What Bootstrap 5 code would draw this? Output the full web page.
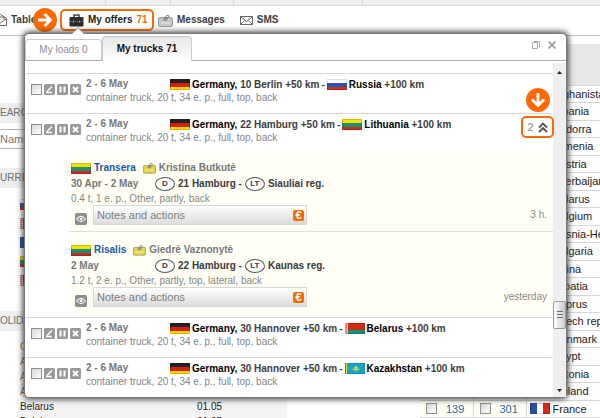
<!DOCTYPE html>
<html lang="en">
<head>
<meta charset="utf-8">
<meta name="viewport" content="width=device-width, initial-scale=1">
<title>My offers</title>
<link href="https://cdn.jsdelivr.net/npm/bootstrap@5.3.0/dist/css/bootstrap.min.css" rel="stylesheet">
<style>
:root{--accent:#ff6a00;--rule:#d6d6d6}
body{font:10px/14px "Liberation Sans",Arial,sans-serif;color:#333;background:#fff;overflow:hidden;min-height:100vh}
svg{display:block;flex:none}
a{color:inherit;text-decoration:none}
button{background:none;border:0;padding:0;color:inherit}
h2{font-size:10px;line-height:20px;margin:0}
.flag{width:20px;height:11px;outline:1px solid #0002;outline-offset:-1px}
.topstrip{height:6px;background:#efefef;border-bottom:1px solid var(--rule)}
.topstrip span{width:65px;border-right:1px solid var(--rule)}
.topstrip span:first-child{width:106px}
.topstrip span:nth-child(3){width:63px}
.topstrip span:nth-child(4){width:129px}
.mainnav{height:30px;border-bottom:1px solid #c4c4c4;padding-top:3px;font-weight:700}
.mainnav a{height:22px;gap:4px;color:#3c3c3c}
.tables-link{width:58px;margin-left:-6px}
.offers-link{position:relative;width:94px;border:2px solid var(--accent);border-radius:5px;padding-left:7px;margin-right:4px}
.mainnav .offers-link{color:#222}
.sms-link{margin-left:15px}
.orange{color:var(--accent)}
.pointer{position:absolute;left:-29px;top:-3px}
.sidebar{width:287px;color:#6d6d6d;padding-top:67px}
.sidebar h2{background:#eee}
.sidebar input{height:20px;width:200px;border:1px solid #b5b5b5;border-width:1px 0;padding:0;color:#888;font-size:11px;display:block;margin:6px 0 19px}
.rates{padding:11px 0 22px 20px;gap:8px;height:123px}
.holidays{margin:8px 0 0 17px;width:270px}
.holidays td{height:15px;padding:0;color:#a6573f}
.holidays td:first-child{padding-left:3px;width:180px}
.holidays .today td{color:#222;background:#f3f3f3}
.countries{margin-top:8px;width:180px;table-layout:fixed;flex:none;font-size:11px}
.countries td,.countries th{padding:0;height:18px;border-bottom:1px solid var(--rule);white-space:nowrap;color:#222;overflow:hidden}
.countries tr:nth-child(odd) td{height:17px}
.countries th{height:41px;background:#e7e7e7}
.countries .num{background:#fffff4;border-right:1px solid var(--rule)}
.countries .num label{display:flex;gap:9px;padding-left:6px;align-items:center;color:#2a66b0;line-height:14px}
.countries .name{padding-left:26px}
.countries .own{padding-left:3px}
.own div{gap:3px}
.win{position:absolute;left:24px;right:33px;top:33px;bottom:20px;background:#fff;border:1px solid #777;border-radius:5px;box-shadow:0 0 6px 1px #333}
.tip{position:absolute;left:46px;top:-7px}
.tabs{height:27px;border-bottom:1px solid #aaa;padding-right:10px}
.tabs button.tab{border:1px solid #c8c8c8;border-bottom:0;border-radius:4px 4px 0 0;height:21px;color:#8d8d8d;width:77px}
.tabs button.tab.on{height:25px;width:90px;margin:0 0 -1px;background:linear-gradient(#e6e6e6,#fff);color:#111;font-weight:700}
.list{padding-top:12px}
.offer{border-top:1px solid var(--rule);height:40px;padding:3px 0 0 6px;border-radius:3px;position:relative}
.offer p,.reply p{margin:0;line-height:13px;color:#858585}
.when{width:84px;color:#777;font-weight:700}
.tools{gap:2px;padding-top:7px;width:55px}
input[type=checkbox]{appearance:none;width:11px;height:11px;border:1px solid #8f8f8f;background:linear-gradient(135deg,#d8d8d8,#fff);margin:0;flex:none}
.route{gap:2px;white-space:nowrap;font-weight:700;color:#3d3d3d;line-height:13px}
.route b{color:#000}
.scroller{width:13px;background:#efefef;padding:8px 0 5px;margin-top:2px}
.thumb{height:28px;width:13px;border:1px solid #999;border-radius:2px;background:linear-gradient(90deg,#fff,#ccc);margin-top:227px}
.count{position:absolute;right:-1px;top:2px;border:2px solid var(--accent);border-radius:5px;width:33px;height:22px;font-size:11px;background:#fff}
.count button{color:#888}
.down{position:absolute;right:2px;top:-30px}
.replies{margin-left:44px;background:#fffff5}
.reply{height:79px;padding:8px 6px 0 2px;border-bottom:1px solid #dfdfdf;margin-bottom:3px}
.replies div.reply:last-child{border-color:transparent}
.person{gap:3px;height:14px;font-weight:700;color:#777}
.person a{color:1b57a5;color:#1b57a5}
.leg{height:17px;gap:3px;font-weight:700;color:#3a3a3a}
.leg .when{width:81px}
.plate{width:20px;height:14px;border:1px solid #555;border-radius:50%;font-size:8px;line-height:12px;text-align:center;background:#fff}
.actions{gap:6px;padding-left:4px}
.notes{width:214px;height:20px;border:1px solid #d8d8d8;background:linear-gradient(#fff,#dcdcdc);padding:0 2px 0 3px;color:#7d7d7d;font-size:11px}
.euro{background:var(--accent);color:#fff;width:11px;height:11px;border-radius:2px;line-height:11px;font-weight:700;font-size:11px;text-align:center}
.ago{color:#888}
</style>
</head>
<body>
<svg width="0" height="0" class="position-absolute" aria-hidden="true">
<symbol id="de" viewBox="0 0 20 11"><path fill="#222" d="M0 0h20v4H0z"/><path fill="#d5200c" d="M0 4h20v4H0z"/><path fill="#ffd400" d="M0 8h20v3H0z"/></symbol>
<symbol id="lt" viewBox="0 0 20 11"><path fill="#f8e000" d="M0 0h20v4H0z"/><path fill="#1d9070" d="M0 4h20v4H0z"/><path fill="#c82a20" d="M0 8h20v3H0z"/></symbol>
<symbol id="ru" viewBox="0 0 20 11"><path fill="#fff" d="M0 0h20v4H0z"/><path fill="#2b55ad" d="M0 4h20v4H0z"/><path fill="#d52b1e" d="M0 8h20v3H0z"/></symbol>
<symbol id="by" viewBox="0 0 20 11"><path fill="#d02a18" d="M0 0h20v7H0z"/><path fill="#159070" d="M0 7h20v4H0z"/><path fill="#f4b8b8" d="M0 0h3v11H0z"/><path stroke="#d44" stroke-dasharray="1 1" d="M1.5 0v11"/></symbol>
<symbol id="kz" viewBox="0 0 20 11"><path fill="#14a5cc" d="M0 0h20v11H0z"/><path fill="#f3dc20" d="M1 0h1v11H1z"/><circle cx="11" cy="5" r="1.7" fill="#f3dc20"/><path d="M7.500 6q3.500 3 7 0" fill="none" stroke="#f3dc20"/></symbol>
<symbol id="fr" viewBox="0 0 20 11"><path fill="#2b4fa0" d="M0 0h7v11H0z"/><path fill="#fff" d="M7 0h6v11H7z"/><path fill="#d42a1c" d="M13 0h7v11h-7z"/></symbol>
<symbol id="edit" viewBox="0 0 11 11"><rect width="11" height="11" rx="1.500" fill="#999"/><path d="M3 7.500 8 2.500M2 8.500h6" stroke="#fff" stroke-width="1.400"/></symbol>
<symbol id="pause" viewBox="0 0 11 11"><rect width="11" height="11" rx="1.500" fill="#999"/><path d="M2.500 2.500h2v6h-2zM6.500 2.500h2v6h-2z" fill="#fff"/></symbol>
<symbol id="del" viewBox="0 0 11 11"><rect width="11" height="11" rx="1.500" fill="#999"/><path d="m3 3 5 5M8 3 3 8" stroke="#fff" stroke-width="1.800"/></symbol>
<symbol id="card" viewBox="0 0 15 13"><rect x=".5" y="3.500" width="14" height="9" rx="1.500" fill="currentColor" stroke="#0005"/><path d="M3 9h9" stroke="#fff9"/><path d="M5 6.500 8.500 1.500q2-1 2.500.8L8 6.500q-1.500.5-1-1l2-2.500" fill="none" stroke="#777"/></symbol>
<symbol id="eye" viewBox="0 0 11 11"><rect width="11" height="11" rx="1.500" fill="#8d8d8d"/><path d="M1.500 5.500q4-5 8 0-4 5-8 0z" fill="none" stroke="#fff"/><circle cx="5.500" cy="5.500" r="1.300" fill="#fff"/></symbol>
</svg>

<div class="topstrip d-flex"><span></span><span></span><span></span><span></span></div>
<nav class="mainnav d-flex align-items-start">
<a href="#" class="tables-link d-flex align-items-center"><svg width="13" height="12" viewBox="0 0 13 12" fill="#fff" stroke="#666"><path d="M.5 4.500 6.500.5l6 4v7H.5z"/><path d="m1 5 5.500 4L12 5M3 3h7v3"/></svg>Tables</a>
<a href="#" class="offers-link d-flex align-items-center ms-2"><svg width="15" height="13" viewBox="0 0 15 13"><path d="M5 3V1h5v2" fill="none" stroke="#444" stroke-width="1.500"/><rect x=".5" y="3" width="14" height="9.500" rx="1" fill="#2c2c2c"/><path d="M1 7.500h13" stroke="#555"/><path d="M4 6.500h1v2H4zM10 6.500h1v2h-1z" fill="#999"/></svg>My offers <span class="orange">71</span>
<svg class="pointer" width="24" height="24" viewBox="0 0 24 24"><circle cx="12" cy="12" r="12" fill="#ff6a00"/><path d="M5 12h12M11.500 6l6 6-6 6" fill="none" stroke="#fff" stroke-width="2.800"/></svg></a>
<a href="#" class="d-flex align-items-center"><svg width="15" height="13" color="#c9c9c9"><use href="#card"/></svg>Messages</a>
<a href="#" class="sms-link d-flex align-items-center"><svg width="13" height="9" viewBox="0 0 13 9" fill="none" stroke="#666"><path d="M.5.5h12v8H.5zM.5.5l6 5 6-5M.5 8.500l4-4M12.500 8.500l-4-4"/></svg>SMS</a>
</nav>

<main class="d-flex justify-content-between align-items-start">
<section class="sidebar">
<h2>EARCH</h2>
<input type="text" placeholder="Name" aria-label="Name">
<h2>URRENCY</h2>
<div class="rates d-flex flex-column">
<svg class="flag"><use href="#ru"/></svg><svg class="flag"><use href="#by"/></svg><svg class="flag"><use href="#fr"/></svg><svg class="flag"><use href="#lt"/></svg><svg class="flag"><use href="#by"/></svg>
</div>
<h2>OLIDAYS</h2>
<table class="holidays">
<tr><td>Croatia</td><td></td></tr>
<tr><td>Albania</td><td></td></tr>
<tr><td>Armenia</td><td></td></tr>
<tr><td>Austria</td><td></td></tr>
<tr class="today"><td>Belarus</td><td>01.05</td></tr>
<tr class="today"><td>Belgium</td><td>01.05</td></tr>
</table>
</section>
<table class="countries">
<colgroup><col width="53"><col width="53"><col></colgroup>
<thead><tr><th></th><th></th><th></th></tr></thead>
<tbody>
<tr><td class="num"></td><td class="num"></td><td class="name">Afghanistan</td></tr>
<tr><td class="num"></td><td class="num"></td><td class="name">Albania</td></tr>
<tr><td class="num"></td><td class="num"></td><td class="name">Andorra</td></tr>
<tr><td class="num"></td><td class="num"></td><td class="name">Armenia</td></tr>
<tr><td class="num"></td><td class="num"></td><td class="name">Austria</td></tr>
<tr><td class="num"></td><td class="num"></td><td class="name">Azerbaijan</td></tr>
<tr><td class="num"></td><td class="num"></td><td class="name">Belarus</td></tr>
<tr><td class="num"></td><td class="num"></td><td class="name">Belgium</td></tr>
<tr><td class="num"></td><td class="num"></td><td class="name">Bosnia-He</td></tr>
<tr><td class="num"></td><td class="num"></td><td class="name">Bulgaria</td></tr>
<tr><td class="num"></td><td class="num"></td><td class="name">China</td></tr>
<tr><td class="num"></td><td class="num"></td><td class="name">Croatia</td></tr>
<tr><td class="num"></td><td class="num"></td><td class="name">Cyprus</td></tr>
<tr><td class="num"></td><td class="num"></td><td class="name">Czech rep</td></tr>
<tr><td class="num"></td><td class="num"></td><td class="name">Denmark</td></tr>
<tr><td class="num"></td><td class="num"></td><td class="name">Egypt</td></tr>
<tr><td class="num"></td><td class="num"></td><td class="name">Estonia</td></tr>
<tr><td class="num"></td><td class="num"></td><td class="name">Finland</td></tr>
<tr><td class="num"><label><input type="checkbox">139</label></td><td class="num"><label><input type="checkbox">301</label></td><td class="own"><div class="d-flex align-items-center"><svg class="flag"><use href="#fr"/></svg>France</div></td></tr>
</tbody>
</table>
</main>

<section class="win d-flex flex-column" aria-label="My offers">
<svg class="tip" width="14" height="8" viewBox="0 0 14 8"><path d="M0 8 7 1l7 7z" fill="#fff"/><path d="M0 7.500 7 .5l7 7" fill="none" stroke="#999"/></svg>
<div class="tabs d-flex align-items-end">
<button type="button" class="tab">My loads 0</button>
<button type="button" class="tab on">My trucks 71</button>
<div class="d-flex ms-auto gap-2 align-self-center mb-1">
<button type="button" aria-label="Restore"><svg width="8" height="8" viewBox="0 0 8 8" fill="none" stroke="#aaa"><path d="M.5 1.500h5v6h-5zM2 .5h5.500v6"/></svg></button>
<button type="button" aria-label="Close"><svg width="8" height="8" viewBox="0 0 8 8" stroke="#999" stroke-width="1.600"><path d="m.5.5 7 7M7.500.5l-7 7"/></svg></button>
</div>
</div>
<div class="d-flex flex-fill">
<div class="list flex-fill">
<article class="offer d-flex">
<div class="tools d-flex align-items-start"><input type="checkbox" aria-label="Select"><button type="button" aria-label="Edit"><svg width="11" height="11"><use href="#edit"/></svg></button><button type="button" aria-label="Pause"><svg width="11" height="11"><use href="#pause"/></svg></button><button type="button" aria-label="Delete"><svg width="11" height="11"><use href="#del"/></svg></button></div>
<div><div class="d-flex"><span class="when">2 - 6 May</span><div class="route d-flex align-items-center"><svg class="flag"><use href="#de"/></svg><span><b>Germany,</b> 10 Berlin +50 km</span><span>-</span><svg class="flag"><use href="#ru"/></svg><span><b>Russia</b> +100 km</span></div></div><p>container truck, 20 t, 34 e. p., full, top, back</p></div>
</article>
<article class="offer d-flex">
<div class="tools d-flex align-items-start"><input type="checkbox" aria-label="Select"><button type="button" aria-label="Edit"><svg width="11" height="11"><use href="#edit"/></svg></button><button type="button" aria-label="Pause"><svg width="11" height="11"><use href="#pause"/></svg></button><button type="button" aria-label="Delete"><svg width="11" height="11"><use href="#del"/></svg></button></div>
<div><div class="d-flex"><span class="when">2 - 6 May</span><div class="route d-flex align-items-center"><svg class="flag"><use href="#de"/></svg><span><b>Germany,</b> 22 Hamburg +50 km</span><span>-</span><svg class="flag"><use href="#lt"/></svg><span><b>Lithuania</b> +100 km</span></div></div><p>container truck, 20 t, 34 e. p., full, top, back</p></div>
<div class="count d-flex align-items-center justify-content-center"><button type="button" class="d-flex align-items-center gap-1">2<svg width="10" height="11" viewBox="0 0 10 11" fill="none" stroke="#555" stroke-width="1.800"><path d="m1 5.500 4-4 4 4M1 10l4-4 4 4"/></svg></button>
<svg class="down" width="24" height="24" viewBox="0 0 24 24"><circle cx="12" cy="12" r="12" fill="#ff6a00"/><path d="M12 5v12M6 11.500l6 6 6-6" fill="none" stroke="#fff" stroke-width="2.800"/></svg></div>
</article>
<div class="replies">
<div class="reply">
<div class="person d-flex align-items-center"><svg class="flag"><use href="#lt"/></svg><a href="#">Transera</a><svg class="ms-1" width="13" height="12" color="#e6d44c"><use href="#card"/></svg><span>Kristina Butkutė</span></div>
<div class="leg d-flex align-items-center"><span class="when">30 Apr - 2 May</span><span class="plate">D</span><span>21 Hamburg -</span><span class="plate">LT</span><span>Siauliai reg.</span></div>
<p>0.4 t, 1 e. p., Other, partly, back</p>
<div class="actions d-flex"><svg class="mt-2" width="12" height="12"><use href="#eye"/></svg><button type="button" class="notes d-flex align-items-center justify-content-between">Notes and actions<span class="euro">€</span></button><span class="ago ms-auto align-self-center">3 h.</span></div>
</div>
<div class="reply">
<div class="person d-flex align-items-center"><svg class="flag"><use href="#lt"/></svg><a href="#">Risalis</a><svg class="ms-1" width="13" height="12" color="#e6d44c"><use href="#card"/></svg><span>Giedrė Vaznonytė</span></div>
<div class="leg d-flex align-items-center"><span class="when">2 May</span><span class="plate">D</span><span>22 Hamburg -</span><span class="plate">LT</span><span>Kaunas reg.</span></div>
<p>1.2 t, 2 e. p., Other, partly, top, lateral, back</p>
<div class="actions d-flex"><svg class="mt-2" width="12" height="12"><use href="#eye"/></svg><button type="button" class="notes d-flex align-items-center justify-content-between">Notes and actions<span class="euro">€</span></button><span class="ago ms-auto align-self-center">yesterday</span></div>
</div>
</div>
<article class="offer d-flex">
<div class="tools d-flex align-items-start"><input type="checkbox" aria-label="Select"><button type="button" aria-label="Edit"><svg width="11" height="11"><use href="#edit"/></svg></button><button type="button" aria-label="Pause"><svg width="11" height="11"><use href="#pause"/></svg></button><button type="button" aria-label="Delete"><svg width="11" height="11"><use href="#del"/></svg></button></div>
<div><div class="d-flex"><span class="when">2 - 6 May</span><div class="route d-flex align-items-center"><svg class="flag"><use href="#de"/></svg><span><b>Germany,</b> 30 Hannover +50 km</span><span>-</span><svg class="flag"><use href="#by"/></svg><span><b>Belarus</b> +100 km</span></div></div><p>container truck, 20 t, 34 e. p., full, top, back</p></div>
</article>
<article class="offer d-flex">
<div class="tools d-flex align-items-start"><input type="checkbox" aria-label="Select"><button type="button" aria-label="Edit"><svg width="11" height="11"><use href="#edit"/></svg></button><button type="button" aria-label="Pause"><svg width="11" height="11"><use href="#pause"/></svg></button><button type="button" aria-label="Delete"><svg width="11" height="11"><use href="#del"/></svg></button></div>
<div><div class="d-flex"><span class="when">2 - 6 May</span><div class="route d-flex align-items-center"><svg class="flag"><use href="#de"/></svg><span><b>Germany,</b> 30 Hannover +50 km</span><span>-</span><svg class="flag"><use href="#kz"/></svg><span><b>Kazakhstan</b> +100 km</span></div></div><p>container truck, 20 t, 34 e. p., full, top, back</p></div>
</article>
</div>
<div class="scroller d-flex flex-column align-items-center">
<svg width="5" height="3"><path d="M0 3 2.500 0 5 3z" fill="#222"/></svg>
<div class="thumb d-flex align-items-center justify-content-center"><svg width="6" height="8" stroke="#666"><path d="M0 .5h6M0 3.500h6M0 6.500h6"/></svg></div>
<svg class="mt-auto" width="5" height="3"><path d="M0 0h5L2.500 3z" fill="#222"/></svg>
</div>
</div>
</section>
<script src="https://cdn.jsdelivr.net/npm/bootstrap@5.3.0/dist/js/bootstrap.bundle.min.js"></script>
</body>
</html>
